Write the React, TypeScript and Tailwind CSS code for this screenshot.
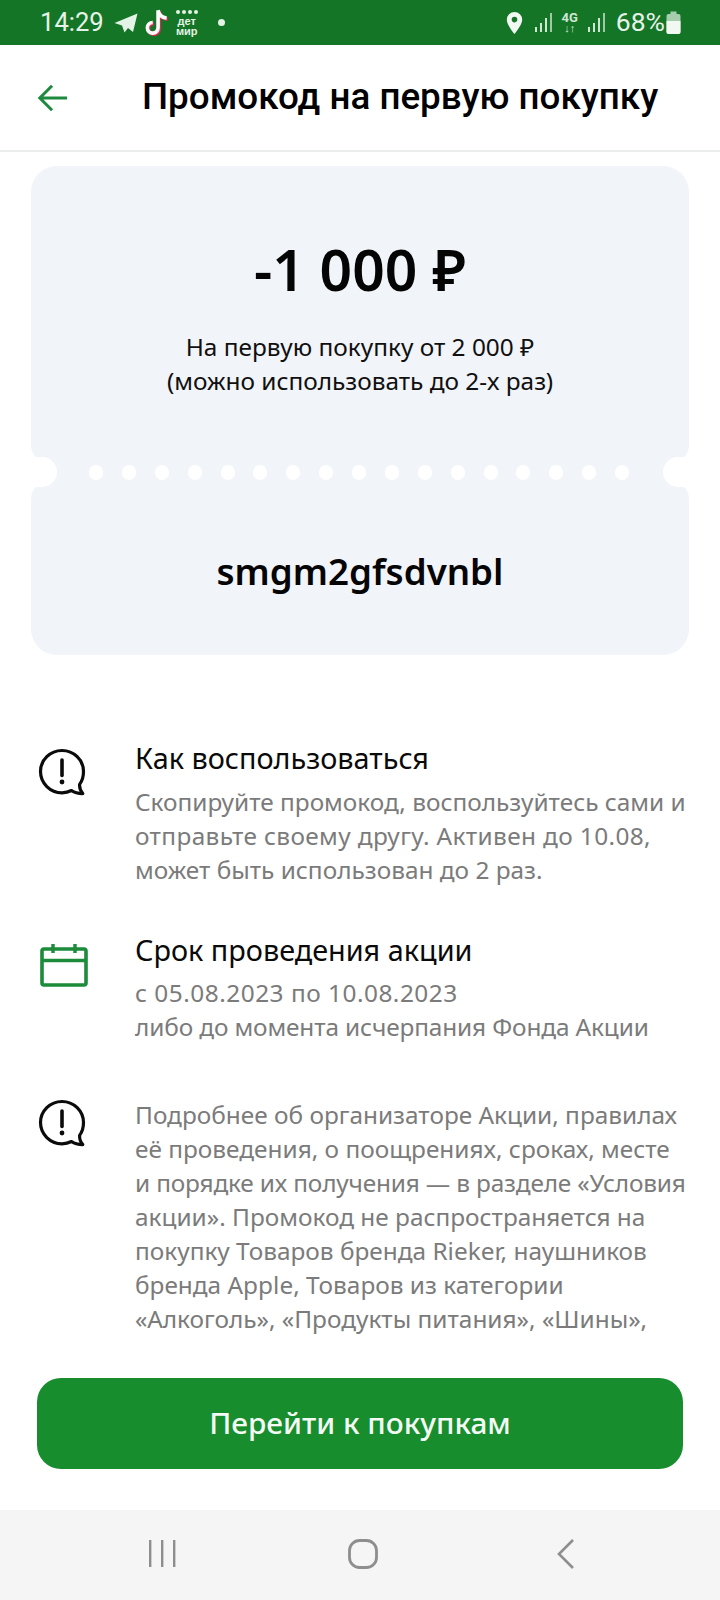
import React from "react";

const Bubble = () => (
  <svg width="48" height="48" viewBox="0 0 48 48" fill="none" className="shrink-0">
    <path d="M24 2.500C12.200 2.500 2.500 11.900 2.500 23.600C2.500 35.300 12.200 44.800 24 44.800C27.400 44.800 30.700 44 33.500 42.500C36.300 44.600 40 45.600 44.800 45.600C42.600 43.200 41.400 40 41.600 36.400C44.200 33 45.500 28.400 45.500 23.600C45.500 11.900 35.800 2.500 24 2.500Z" stroke="#0b0b0b" strokeWidth="3.200" strokeLinejoin="round" />
    <path d="M24 12V27.500" stroke="#0b0b0b" strokeWidth="3.600" strokeLinecap="round" />
    <circle cx="24" cy="34" r="2.400" fill="#0b0b0b" />
  </svg>
);

const Calendar = () => (
  <svg width="48" height="44" viewBox="0 0 48 44" fill="none" className="shrink-0">
    <rect x="2" y="6" width="44" height="36" rx="2" stroke="#1c8b3a" strokeWidth="3.600" />
    <path d="M2 17.500H46" stroke="#1c8b3a" strokeWidth="3.400" />
    <path d="M13 1V10M35 1V10" stroke="#1c8b3a" strokeWidth="3.400" />
  </svg>
);

const Signal = () => (
  <svg width="18" height="22" viewBox="0 0 18 22" fill="#cfe6d2">
    <rect x="0" y="15" width="2" height="5" />
    <rect x="5" y="11" width="2" height="9" />
    <rect x="10" y="6" width="2" height="14" />
    <rect x="15" y="1" width="2" height="19" opacity="0.75" />
  </svg>
);

const sans = "font-['Roboto',sans-serif]";
const body = "font-['Noto_Sans',sans-serif]";

export default function App() {
  const dots = Array.from({ length: 17 });
  return (
    <div className={`w-[720px] h-[1600px] bg-white flex flex-col overflow-hidden ${sans}`}>
      <div className="h-[45px] shrink-0 bg-[#157527] flex items-center justify-between pl-[40px] pr-[39px] text-[#e6f3e8]">
        <div className="flex items-center">
          <span className="text-[25.6px] leading-none">14:29</span>
          <svg width="24" height="22" viewBox="0 0 24 22" className="ml-[10px]" fill="#e3f3e5">
            <path d="M23.500 1.500L0.500 11L8 13.500L10.500 20.500L14 16L19 20Z" />
          </svg>
          <svg width="26" height="30" viewBox="0 0 24 28" className="ml-[6px]">
            <path d="M13 2V18.500A5 5 0 1 1 8 13.500M13 2C13.600 6 16.400 9 21 9.500" fill="none" stroke="#e8265a" strokeWidth="3.400" transform="translate(1 1)" />
            <path d="M13 2V18.500A5 5 0 1 1 8 13.500M13 2C13.600 6 16.400 9 21 9.500" fill="none" stroke="#fafafa" strokeWidth="3.400" />
          </svg>
          <div className="ml-[6px] flex flex-col items-center text-[11px] leading-[10px] font-bold text-[#e3f3e5] font-['Liberation_Sans',sans-serif]">
            <span className="flex gap-[2px] mb-[2px]">
              <i className="w-[4px] h-[4px] rounded-full bg-[#e3f3e5]" />
              <i className="w-[4px] h-[4px] rounded-full bg-[#e3f3e5]" />
              <i className="w-[4px] h-[4px] rounded-full bg-[#e3f3e5]" />
              <i className="w-[4px] h-[4px] rounded-full bg-[#e3f3e5]" />
            </span>
            <span>дет</span>
            <span>мир</span>
          </div>
          <i className="ml-[20px] w-[7px] h-[7px] rounded-full bg-[#e3f3e5]" />
        </div>
        <div className="flex items-center">
          <svg width="17" height="24" viewBox="0 0 17 24" fill="#f2f8f2">
            <path fillRule="evenodd" d="M8.500 1A7.700 7.700 0 0 0 .8 8.800C.8 14 8.500 23 8.500 23S16.200 14 16.200 8.800A7.700 7.700 0 0 0 8.500 1ZM8.500 11.400A2.800 2.800 0 1 1 8.500 5.800A2.800 2.800 0 0 1 8.500 11.400Z" />
          </svg>
          <span className="ml-[12px]"><Signal /></span>
          <div className="ml-[8px] flex flex-col items-center text-[13px] leading-[12px] font-bold text-[#cfe6d2]">
            <span>4G</span>
            <span className="text-[11px] leading-[9px] font-normal">↓↑</span>
          </div>
          <span className="ml-[10px]"><Signal /></span>
          <span className="ml-[10px] text-[26.500px] leading-none">68%</span>
          <svg width="15" height="24" viewBox="0 0 15 24" className="ml-[1px]">
            <rect x="4.500" y="0.500" width="6" height="3" fill="#a6cdae" />
            <rect x="0.500" y="3" width="14" height="20" rx="2" fill="#a6cdae" />
            <path d="M0.500 10H14.500V21A2 2 0 0 1 12.500 23H2.500A2 2 0 0 1 .5 21Z" fill="#f2f8f2" />
          </svg>
        </div>
      </div>

      <div className="h-[107px] shrink-0 bg-white border-b-[2px] border-[#ebecec] flex items-center relative">
        <svg width="32" height="34" viewBox="0 0 34 34" fill="none" className="ml-[37px]">
          <path d="M32 17H3M16 4L3 17L16 30" stroke="#1f8a3f" strokeWidth="3.200" />
        </svg>
        <h1 className="ml-[73px] text-[36.800px] leading-none font-medium text-black whitespace-nowrap">Промокод на первую покупку</h1>
      </div>

      <div className="flex-1 min-h-0 overflow-hidden">
        <div className="mt-[14px] mx-[31px] h-[489px] flex flex-col">
          <div className="h-[297px] bg-[#f1f4f8] rounded-t-[26px] rounded-b-[18px] flex flex-col items-center">
            <div className="mt-[71px] text-[57px] leading-[64px] font-semibold text-[#050505] font-['Noto_Sans',sans-serif]">-1 000 ₽</div>
            <div className={`mt-[29px] text-[24.400px] leading-[34px] text-center text-[#101010] ${body}`}>
              На первую покупку от 2 000 ₽<br />(можно использовать до 2-х раз)
            </div>
          </div>
          <div className="h-[24px] -my-[3px] bg-[#f1f4f8] relative flex items-center justify-between pl-[58px] pr-[60px]">
            {dots.map((_, i) => (
              <i key={i} className="w-[14px] h-[15px] rounded-full bg-white" />
            ))}
            <i className="absolute left-0 top-[-3px] w-[26px] h-[30px] rounded-r-full bg-white" />
            <i className="absolute right-0 top-[-3px] w-[26px] h-[30px] rounded-l-full bg-white" />
          </div>
          <div className="flex-1 bg-[#f1f4f8] rounded-b-[26px] rounded-t-[18px] flex justify-center pt-[68px]">
            <div className="text-[36.700px] leading-[44px] font-semibold text-[#050505] font-['Noto_Sans',sans-serif]">smgm2gfsdvnbl</div>
          </div>
        </div>

        <div className={`mt-[86px] pl-[38px] flex flex-col ${body}`}>
          <div className="flex h-[192px]">
            <div className="mt-[7px]"><Bubble /></div>
            <div className="ml-[49px]">
              <div className="text-[28.800px] leading-[34px] text-[#0a0a0a]">Как воспользоваться</div>
              <div className="mt-[10px] text-[24.400px] leading-[34px] text-[#7b7b7b] whitespace-nowrap">
                Скопируйте промокод, воспользуйтесь сами и<br />
                <span className="tracking-[0.37px]">отправьте своему другу. Активен до 10.08,</span><br />
                может быть использован до 2 раз.
              </div>
            </div>
          </div>
          <div className="flex h-[159px]">
            <div className="mt-[10px] ml-[2px] mr-[-2px]"><Calendar /></div>
            <div className="ml-[49px]">
              <div className="text-[28.800px] leading-[34px] text-[#0a0a0a]">Срок проведения акции</div>
              <div className="mt-[9px] text-[24.400px] leading-[34px] text-[#7b7b7b] whitespace-nowrap">
                <span className="tracking-[0.5px]">с 05.08.2023 по 10.08.2023</span><br />
                <span className="tracking-[-0.13px]">либо до момента исчерпания Фонда Акции</span>
              </div>
            </div>
          </div>
          <div className="flex">
            <div className="mt-[7px] h-[48px]"><Bubble /></div>
            <div className="ml-[49px] pt-[6px] text-[24.400px] leading-[34px] text-[#7b7b7b] whitespace-nowrap">
              Подробнее об организаторе Акции, правилах<br />
              её проведения, о поощрениях, сроках, месте<br />
              <span className="tracking-[-0.17px]">и порядке их получения — в разделе «Условия</span><br />
              акции». Промокод не распространяется на<br />
              покупку Товаров бренда Rieker, наушников<br />
              бренда Apple, Товаров из категории<br />
              «Алкоголь», «Продукты питания», «Шины»,
            </div>
          </div>
        </div>
      </div>

      <div className="h-[132px] shrink-0 bg-white pt-[0px] px-[37px]">
        <button className="w-full h-[91px] rounded-[24px] bg-[#178d2e] text-[#f4fbf5] text-[29.800px] font-medium font-['Noto_Sans',sans-serif]">Перейти к покупкам</button>
      </div>

      <div className="h-[90px] shrink-0 bg-[#f5f5f5] flex items-center justify-between pl-[148px] pr-[144px] pb-[3px]">
        <svg width="28" height="30" viewBox="0 0 28 30" fill="#8e8e8e">
          <rect x="1" y="1" width="2.400" height="27" />
          <rect x="13" y="1" width="2.400" height="27" />
          <rect x="25" y="1" width="2.400" height="27" />
        </svg>
        <svg width="30" height="30" viewBox="0 0 30 30" fill="none" className="mr-[6px]">
          <rect x="1.500" y="1.500" width="27" height="27" rx="10" stroke="#8e8e8e" strokeWidth="2.800" />
        </svg>
        <svg width="20" height="32" viewBox="0 0 20 32" fill="none">
          <path d="M17 2L3 16L17 30" stroke="#8e8e8e" strokeWidth="2.600" />
        </svg>
      </div>
    </div>
  );
}
